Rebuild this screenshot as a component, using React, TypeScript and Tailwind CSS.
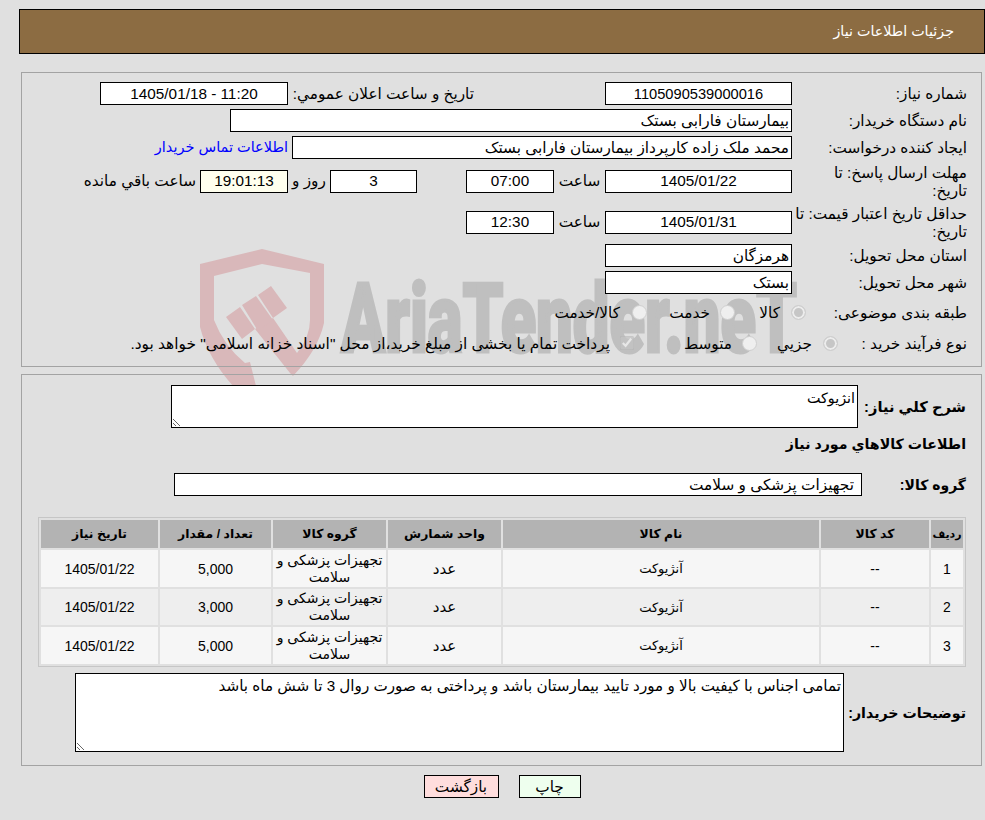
const rows = [
  { id: "1", qty: "5,000" },
  { id: "2", qty: "3,000" },
  { id: "3", qty: "5,000" },
]

const radioClass =
  "m-0 h-[15px] w-[15px] shrink-0 appearance-none rounded-full border border-[#cfcfcf] bg-[#efefef] checked:bg-[#c6c6c6] checked:shadow-[inset_0_0_0_2px_#ececec]"

function Box({
  className = "",
  bg = "bg-white",
  children,
}: {
  className?: string
  bg?: string
  children?: React.ReactNode
}) {
  return (
    <div className={`flex h-[23px] shrink-0 items-center border border-black px-[2px] pt-[1px] ${bg} ${className}`}>
      {children}
    </div>
  )
}

function Label({ className = "w-[175px]", children }: { className?: string; children: React.ReactNode }) {
  return <div className={`shrink-0 pt-[1px] leading-[18px] ${className}`}>{children}</div>
}

function Watermark() {
  return (
    <svg className="absolute left-0 top-0 h-[400px] w-[985px] [direction:ltr]" viewBox="0 0 985 400" aria-hidden="true">
      <g fill="#d9b8ba">
        <path
          fillRule="evenodd"
          d="M200 264 L262 249 L324 264 L324 323 Q318 350 293 376 L290 373 L255 329 L273 318 L297 353 Q310 337 310 320 L310 273 L262 264 L214 276 L214 320 Q224 346 245 363 L250 362 L257 390 L233 386 Q208 358 200 327 Z"
        />
        <path d="M226 317 L240 307 L255 329 L242 339 Z" />
        <path d="M242 305 L256 296 L273 320 L258 331 Z" />
        <path d="M258 295 L271 286 L287 308 L273 318 Z" />
      </g>
      <text
        x="341"
        y="352"
        fill="#bfbfbf"
        stroke="#bfbfbf"
        strokeWidth="3"
        fontFamily="Roboto, sans-serif"
        fontWeight="900"
        fontSize="97"
        textLength="456"
        lengthAdjust="spacingAndGlyphs"
      >
        AriaTender.neT
      </text>
    </svg>
  )
}

export default function App() {
  return (
    <div
      dir="rtl"
      className="relative h-[820px] overflow-hidden bg-[#e0e0e0] pl-[19px] pt-[9px] font-['Liberation_Sans','DejaVu_Sans',sans-serif] text-[15.3px] text-black"
    >
      <Watermark />
      <div className="relative">
        <div className="flex h-[45px] items-center border border-black bg-[#8c6c42] pr-[30px] text-[14.3px] text-white">
          جزئيات اطلاعات نياز
        </div>

        <div className="ml-[2px] mr-[3px] mt-[18px] h-[295px] border border-[#a3a3a3] pr-[14px] pt-[9px]">
          <div className="flex items-center">
            <Label>شماره نياز:</Label>
            <Box className="w-[187px] justify-center text-[14.67px]">1105090539000016</Box>
            <Label className="mr-[131px] w-[186px]">تاریخ و ساعت اعلان عمومي:</Label>
            <Box className="w-[188px] justify-center">
              <span dir="ltr">1405/01/18 - 11:20</span>
            </Box>
          </div>
          <div className="mt-[4px] flex items-center">
            <Label>نام دستگاه خریدار:</Label>
            <Box className="w-[562px]">بيمارستان فارابی بستک</Box>
          </div>
          <div className="mt-[4px] flex items-center">
            <Label>ایجاد کننده درخواست:</Label>
            <Box className="w-[500px]">محمد ملک زاده کارپرداز بيمارستان فارابی بستک</Box>
            <a className="mr-[4px] text-[14.5px] text-[#0000ff]">اطلاعات تماس خریدار</a>
          </div>
          <div className="mt-[5px] flex h-[34px] items-center">
            <Label>
              مهلت ارسال پاسخ: تا
              <br />
              تاریخ:
            </Label>
            <Box className="w-[187px] justify-center">1405/01/22</Box>
            <div className="w-[51px] shrink-0 text-center">ساعت</div>
            <Box className="w-[88px] justify-center">07:00</Box>
            <Box className="mr-[49px] w-[87px] justify-center">3</Box>
            <div className="w-[42px] shrink-0 text-center">روز و</div>
            <Box bg="bg-[#ffffee]" className="w-[88px] justify-center">
              19:01:13
            </Box>
            <div className="mr-[4px] whitespace-nowrap">ساعت باقي مانده</div>
          </div>
          <div className="mt-[7px] flex h-[34px] items-center">
            <Label>
              حداقل تاریخ اعتبار قيمت: تا
              <br />
              تاریخ:
            </Label>
            <Box className="w-[187px] justify-center">1405/01/31</Box>
            <div className="w-[51px] shrink-0 text-center">ساعت</div>
            <Box className="w-[88px] justify-center">12:30</Box>
          </div>
          <div className="mt-[5px] flex items-center">
            <Label>استان محل تحویل:</Label>
            <Box className="w-[187px]">هرمزگان</Box>
          </div>
          <div className="mt-[4px] flex items-center">
            <Label>شهر محل تحویل:</Label>
            <Box className="w-[187px]">بستک</Box>
          </div>
          <div className="mt-[8px] flex h-[20px] items-center">
            <Label className="w-[161px]">طبقه بندی موضوعی:</Label>
            <div className="flex w-[71px] shrink-0 items-center gap-[11px]">
              <input type="radio" disabled defaultChecked name="cat" className={radioClass} />
              <span className="pt-[2px]">کالا</span>
            </div>
            <div className="flex w-[88px] shrink-0 items-center gap-[10px]">
              <input type="radio" disabled name="cat" className={radioClass} />
              <span className="pt-[2px]">خدمت</span>
            </div>
            <div className="flex shrink-0 items-center gap-[12px]">
              <input type="radio" disabled name="cat" className={radioClass} />
              <span className="pt-[2px]">کالا/خدمت</span>
            </div>
          </div>
          <div className="mt-[11px] flex h-[20px] items-center">
            <Label className="w-[129px]">نوع فرآیند خرید :</Label>
            <div className="flex w-[81px] shrink-0 items-center gap-[11px]">
              <input type="radio" disabled defaultChecked name="kind" className={radioClass} />
              <span className="pt-[2px]">جزيي</span>
            </div>
            <div className="flex w-[123px] shrink-0 items-center gap-[10px]">
              <input type="radio" disabled name="kind" className={radioClass} />
              <span className="pt-[2px]">متوسط</span>
            </div>
            <div className="flex items-center gap-[10px] whitespace-nowrap">
              <input type="checkbox" disabled defaultChecked className="m-0 h-[14px] w-[14px]" />
              <span className="pt-[1px] text-[15.4px]">
                پرداخت تمام یا بخشی از مبلغ خرید،از محل "اسناد خزانه اسلامی" خواهد بود.
              </span>
            </div>
          </div>
        </div>

        <div className="ml-[2px] mr-[3px] mt-[7px] h-[392px] border border-[#a3a3a3] pr-[15px] pt-[10px]">
          <div className="flex items-center">
            <Label className="w-[108px] text-[14.67px] font-bold">شرح كلي نياز:</Label>
            <textarea
              readOnly
              defaultValue="انژیوکت"
              className="block h-[43px] w-[687px] resize border border-black bg-white px-[2px] pt-[3px] text-[14.3px] leading-[18px]"
            />
          </div>
          <div className="mt-[7px] flex h-[20px] items-center text-[14.2px] font-bold">اطلاعات كالاهاي مورد نياز</div>
          <div className="mt-[18px] flex items-center">
            <Label className="w-[104px] text-[14px] font-bold">گروه کالا:</Label>
            <Box className="w-[688px] pr-[7px]">تجهيزات پزشکی و سلامت</Box>
          </div>

          <table className="mt-[21px] w-[928px] table-fixed border-separate border-spacing-[2px] border border-[#c6c6c6]">
            <colgroup>
              <col className="w-[32px]" />
              <col className="w-[108px]" />
              <col className="w-[316px]" />
              <col className="w-[113px]" />
              <col className="w-[113px]" />
              <col className="w-[111px]" />
              <col className="w-[117px]" />
            </colgroup>
            <thead>
              <tr className="h-[28px] bg-[#b3b3b3] text-[12.4px] font-bold">
                <th className="p-0 text-[11px] font-bold">ردیف</th>
                <th className="p-0 font-bold">کد کالا</th>
                <th className="p-0 font-bold">نام کالا</th>
                <th className="p-0 font-bold">واحد شمارش</th>
                <th className="p-0 font-bold">گروه کالا</th>
                <th className="p-0 font-bold">تعداد / مقدار</th>
                <th className="p-0 font-bold">تاریخ نياز</th>
              </tr>
            </thead>
            <tbody>
              {rows.map((row, i) => (
                <tr
                  key={row.id}
                  className={`text-center text-[14px] ${i === 1 ? "h-[36px] bg-[#eeeeee]" : "h-[37px] bg-[#f6f6f6]"}`}
                >
                  <td className="p-0 pt-[1px]">{row.id}</td>
                  <td className="p-0 pt-[1px]">--</td>
                  <td className="p-0 pt-[1px] text-[13px]">آنژیوکت</td>
                  <td className="p-0 pt-[1px] text-[15px]">عدد</td>
                  <td className="p-0 leading-[17px]">تجهيزات پزشکی و سلامت</td>
                  <td className="p-0 pt-[1px]">{row.qty}</td>
                  <td className="p-0 pt-[1px]">1405/01/22</td>
                </tr>
              ))}
            </tbody>
          </table>

          <div className="mt-[6px] flex items-center">
            <Label className="w-[122px] text-[14.2px] font-bold">توضیحات خریدار:</Label>
            <textarea
              readOnly
              defaultValue="تمامی اجناس با کیفیت بالا و مورد تایید بيمارستان باشد و پرداختی به صورت روال 3 تا شش ماه باشد"
              className="block h-[79px] w-[769px] resize border border-black bg-white px-[2px] pt-[3px] text-[15.2px] leading-[18px]"
            />
          </div>
        </div>

        <div className="mt-[9px] flex justify-center gap-[20px]">
          <button className="h-[23px] w-[62px] border border-black bg-[#eeffee]">چاپ</button>
          <button className="h-[23px] w-[75px] border border-black bg-[#ffdddd]">بازگشت</button>
        </div>
      </div>
    </div>
  )
}
